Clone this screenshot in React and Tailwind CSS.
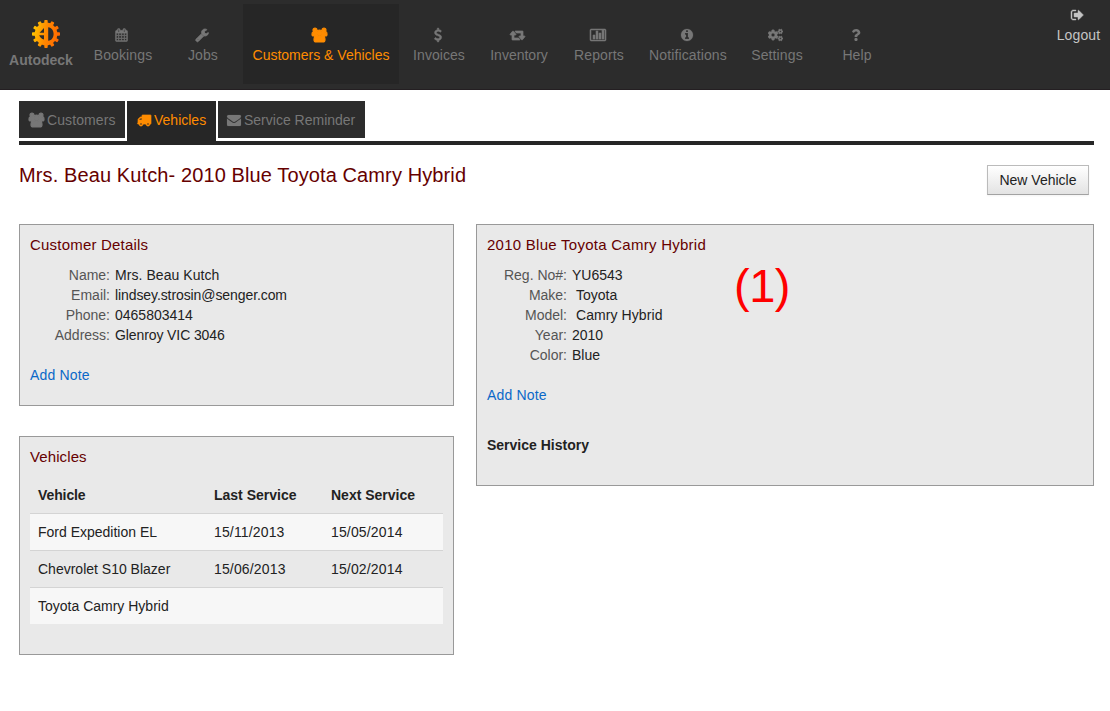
import { FaCogs, FaQuestion } from "react-icons/fa";

const PATHS = {
  calendar: [
    "0 0 1792 1792",
    "M192 1664h288v-288h-288v288zm352 0h320v-288h-320v288zm-352-352h288v-320h-288v320zm352 0h320v-320h-320v320zm-352-384h288v-288h-288v288zm736 736h320v-288h-320v288zm-384-736h320v-288h-320v288zm768 736h288v-288h-288v288zm-384-352h320v-320h-320v320zm-352-864v-288q0-13-9.5-22.5t-22.5-9.5h-64q-13 0-22.5 9.5t-9.5 22.5v288q0 13 9.5 22.5t22.5 9.5h64q13 0 22.5-9.5t9.5-22.5zm736 864h288v-320h-288v320zm-384-384h320v-288h-320v288zm384 0h288v-288h-288v288zm32-480v-288q0-13-9.5-22.5t-22.5-9.5h-64q-13 0-22.5 9.5t-9.5 22.5v288q0 13 9.5 22.5t22.5 9.5h64q13 0 22.5-9.5t9.5-22.5zm384-64v1280q0 52-38 90t-90 38h-1408q-52 0-90-38t-38-90v-1280q0-52 38-90t90-38h128v-96q0-66 47-113t113-47h64q66 0 113 47t47 113v96h384v-96q0-66 47-113t113-47h64q66 0 113 47t47 113v96h128q52 0 90 38t38 90z",
    60,
  ],
  wrench: [
    "0 0 1792 1792",
    "M448 1472q0-26-19-45t-45-19-45 19-19 45 19 45 45 19 45-19 19-45zm644-420l-682 682q-37 37-90 37-52 0-91-37l-106-108q-38-36-38-90 0-53 38-91l681-681q39 98 114.5 173.5t173.5 114.5zm634-435q0 39-23 106-47 134-164.5 217.5t-258.5 83.5q-185 0-316.5-131.5t-131.5-316.5 131.5-316.5 316.5-131.5q58 0 121.5 16.5t107.5 46.5q16 11 16 28t-16 28l-293 169v224l193 107q5-3 79-48.5t135.5-81 70.5-35.5q15 0 23.5 10t8.5 25z",
    100,
  ],
  users: [
    "64 0 1920 1792",
    "M657 896q-162 5-265 128h-134q-82 0-138-40.5t-56-118.5q0-353 124-353 6 0 43.5 21t97.5 42.5 119 21.5q67 0 133-23-5 37-5 66 0 159 81 293zm1071 637q0 120-73 189.5t-194 69.5h-874q-121 0-194-69.5t-73-189.5q0-53 3.5-103.5t14-109 26.5-108.5 43-97.5 62-81 85.5-53.5 111.5-20q10 0 43 21.5t73 48 107 48 135 21.5 135-21.5 107-48 73-48 43-21.5q61 0 111.5 20t85.5 53.5 62 81 43 97.5 26.5 108.5 14 109 3.5 103.5zm-1024-1277q0 106-75 181t-181 75-181-75-75-181 75-181 181-75 181 75 75 181zm704 384q0 159-112.5 271.5t-271.5 112.5-271.5-112.5-112.5-271.5 112.5-271.5 271.5-112.5 271.5 112.5 112.5 271.5zm576 225q0 78-56 118.5t-138 40.5h-134q-103-123-265-128 81-134 81-293 0-29-5-66 66 23 133 23 59 0 119-21.5t97.5-42.5 43.5-21q124 0 124 353zm-128-609q0 106-75 181t-181 75-181-75-75-181 75-181 181-75 181 75 75 181z",
    150,
  ],
  dollar: [
    "384 0 1024 1792",
    "M1362 1185q0 153-99.5 263.5t-258.5 136.5v175q0 14-9 23t-23 9h-135q-13 0-22.5-9.5t-9.5-22.5v-175q-66-9-127.5-31t-101.5-44.5-74-48-46.5-37.5-17.5-18q-17-21-2-41l103-135q7-10 23-12 15-2 24 9l2 2q113 99 243 125 37 8 74 8 81 0 142.5-43t61.5-122q0-28-15-53t-33.5-42-58.5-37.5-66-32-80-32.5q-39-16-61.5-25t-61.5-26.5-62.5-31-56.5-35.5-53.5-42.5-43.5-49-35.5-58-21-66.5-8.5-78q0-138 98-242t255-134v-180q0-13 9.5-22.5t22.5-9.5h135q14 0 23 9t9 23v176q57 6 110.5 23t87 33.5 63.5 37.5 39 29 15 14q17 18 5 38l-81 146q-8 15-23 16-14 3-27-7-3-3-14.5-12t-39-26.5-58.5-32-74.5-26-85.5-11.5q-95 0-155 43t-60 111q0 26 8.5 48t29.5 41.5 39.5 33 56 31 60.5 27 70 27.5q53 20 81 31.5t76 35 75.5 42.5 62 50 53 63.5 31.5 76.5 13 94z",
    60,
  ],
  retweet: [
    "64 0 1920 1792",
    "M1344 1504q0 13-9.5 22.5t-22.5 9.5h-960q-8 0-13.5-2t-9-7-5.5-8-3-11.5-1-11.5v-600h-192q-26 0-45-19t-19-45q0-24 15-41l320-384q19-22 49-22t49 22l320 384q15 17 15 41 0 26-19 45t-45 19h-192v384h576q16 0 25 11l160 192q7 10 7 21zm640-416q0 24-15 41l-320 384q-20 23-49 23t-49-23l-320-384q-15-17-15-41 0-26 19-45t45-19h192v-384h-576q-16 0-25-12l-160-192q-7-9-7-20 0-13 9.5-22.5t22.5-9.5h960q8 0 13.5 2t9 7 5.5 8 3 11.5 1 11.5v600h192q26 0 45 19t19 45z",
    90,
  ],
  chart: [
    "0 0 2048 1792",
    "M640 896v512h-256v-512h256zm384-512v1024h-256v-1024h256zm384 256v768h-256v-768h256zm384-384v1152h-256v-1152h256zm128 1248v-1216q0-13-9.5-22.5t-22.5-9.5h-1728q-13 0-22.5 9.5t-9.5 22.5v1216q0 13 9.5 22.5t22.5 9.5h1728q13 0 22.5-9.5t9.5-22.5zm128-1216v1216q0 66-47 113t-113 47h-1728q-66 0-113-47t-47-113v-1216q0-66 47-113t113-47h1728q66 0 113 47t47 113z",
    70,
  ],
  info: [
    "128 0 1536 1792",
    "M1152 1376v-160q0-14-9-23t-23-9h-96v-512q0-14-9-23t-23-9h-320q-14 0-23 9t-9 23v160q0 14 9 23t23 9h96v320h-96q-14 0-23 9t-9 23v160q0 14 9 23t23 9h448q14 0 23-9t9-23zm-128-896v-160q0-14-9-23t-23-9h-192q-14 0-23 9t-9 23v160q0 14 9 23t23 9h192q14 0 23-9t9-23zm640 416q0 209-103 385.5t-279.5 279.5-385.5 103-385.5-103-279.5-279.5-103-385.5 103-385.5 279.5-279.5 385.5-103 385.5 103 279.5 279.5 103 385.5z",
    30,
  ],
  logout: [
    "64 0 1664 1792",
    "M704 1440q0 4 1 20t.5 26.5-3 23.5-10 19.5-20.5 6.5h-320q-119 0-203.5-84.5t-84.5-203.5v-704q0-119 84.5-203.5t203.5-84.5h320q13 0 22.5 9.5t9.5 22.5q0 4 1 20t.5 26.5-3 23.5-10 19.5-20.5 6.5h-320q-66 0-113 47t-47 113v704q0 66 47 113t113 47h312l11.5 1 11.5 3 8 5.5 7 9 2 13.5zm928-544q0 26-19 45l-544 544q-19 19-45 19t-45-19-19-45v-288h-448q-26 0-45-19t-19-45v-384q0-26 19-45t45-19h448v-288q0-26 19-45t45-19 45 19l544 544q19 19 19 45z",
    60,
  ],
  truck: [
    "0 0 1792 1792",
    "M640 1408q0-52-38-90t-90-38-90 38-38 90 38 90 90 38 90-38 38-90zm-384-512h384v-256h-158q-13 0-22 9l-195 195q-9 9-9 22v30zm1280 512q0-52-38-90t-90-38-90 38-38 90 38 90 90 38 90-38 38-90zm256-1088v1024q0 15-4 26.5t-13.5 18.5-16.5 11.5-23.5 6-22.5 2-25.5 0-22.5-.5q0 106-75 181t-181 75-181-75-75-181h-384q0 106-75 181t-181 75-181-75-75-181h-64q-3 0-22.5.5t-25.5 0-22.5-2-23.5-6-16.5-11.5-13.5-18.5-4-26.5q0-26 19-45t45-19v-320q0-8-.5-35t0-38 2.5-34.5 6.5-37 14-30.5 22.5-30l198-198q19-19 50.5-32t58.5-13h160v-192q0-26 19-45t45-19h1024q26 0 45 19t19 45z",
    90,
  ],
  envelope: [
    "0 0 1792 1792",
    "M1792 710v794q0 66-47 113t-113 47h-1472q-66 0-113-47t-47-113v-794q44 49 101 87 362 246 497 345 57 42 92.5 65.5t94.5 48 110 24.5h2q51 0 110-24.5t94.5-48 92.5-65.5q170-123 498-345 57-39 100-87zm0-294q0 79-49 151t-122 123q-376 261-468 325-10 7-42.5 31t-54 38.5-52 32.5-57.5 27-50 9h-2q-23 0-50-9t-57.5-27-52-32.5-54-38.5-42.5-31q-91-64-262-182.5t-205-142.5q-62-42-117-115.5t-55-136.5q0-78 41.5-130t118.5-52h1472q65 0 112.5 47t47.5 113z",
    20,
  ],
};

function Icon({ name, className }) {
  if (name === "cogs") return <FaCogs className={className} stroke="currentColor" strokeWidth="14" />;
  if (name === "question") return <FaQuestion className={className} />;
  const [box, d, weight] = PATHS[name];
  return (
    <svg viewBox={box} className={`overflow-visible ${className}`} fill="currentColor" stroke="currentColor" strokeWidth={weight}>
      <path d={d} />
    </svg>
  );
}

const TEETH = [0, 30, 60, 90, 120, 150, 180, 210, 240, 270, 300, 330];

function Logo() {
  return (
    <svg viewBox="0 0 28 28" className="h-7 w-7">
      <defs>
        <linearGradient id="flame" gradientUnits="userSpaceOnUse" x1="0" y1="10" x2="28" y2="16">
          <stop offset="0" stopColor="#ffc800" />
          <stop offset="0.5" stopColor="#ff8800" />
          <stop offset="1" stopColor="#ff6600" />
        </linearGradient>
        <mask id="gear">
          <circle cx="14" cy="14" r="11.4" fill="#fff" />
          {TEETH.map((a) => (
            <rect key={a} x="12.3" y="0" width="3.400" height="5" rx="0.8" fill="#fff" transform={`rotate(${a} 14 14)`} />
          ))}
          <path d="M12 8v4.800H7.600zM7.200 15.200H12v4.300c-2.200-.5-4-2-4.800-4.300zM16.200 7.200c3.600.4 5.400 3.300 5.400 6.800s-1.800 6.400-5.400 6.800z" fill="#000" />
        </mask>
      </defs>
      <rect width="28" height="28" fill="url(#flame)" mask="url(#gear)" />
    </svg>
  );
}

const NAV = [
  ["Bookings", "calendar", "w-20", "h-3.5 w-[13px]", "tracking-[0.12px]"],
  ["Jobs", "wrench", "w-20", "h-3.5 w-3.5", "tracking-[0.1px]"],
  ["Customers & Vehicles", "users", "w-[156px]", "h-3.5 w-[15px]", ""],
  ["Invoices", "dollar", "w-20", "h-3.5 w-2", "tracking-[0.05px]"],
  ["Inventory", "retweet", "w-20", "h-3.5 w-[15px]", ""],
  ["Reports", "chart", "w-20", "h-3.5 w-4", "tracking-[0.12px]"],
  ["Notifications", "info", "w-[98px]", "h-3.5 w-3", "tracking-[0.12px]"],
  ["Settings", "cogs", "w-20", "h-3.5 w-[15px]", "tracking-[0.12px]"],
  ["Help", "question", "w-20", "h-3 w-2.5", "tracking-[0.1px]"],
];

function NavBar() {
  return (
    <header className="flex h-[90px] border-b border-[#241f22] bg-[#2c2c2c] text-[#777]">
      <div className="flex w-[83px] flex-col items-center pt-5 pr-px">
        <div className="pl-2.5">
          <Logo />
        </div>
        <div className="mt-0.5 text-sm leading-5 font-bold">Autodeck</div>
      </div>
      <nav className="flex pt-1">
        {NAV.map(([label, icon, width, size, tracking]) => (
          <a
            key={label}
            className={`flex h-20 flex-col items-center ${width} ${
              icon === "users" ? "bg-[#262626] text-[#ff8c00]" : ""
            }`}
          >
            <span className="mt-6 flex h-3.5 items-center pr-[3px]">
              <Icon name={icon} className={size} />
            </span>
            <span className={`mt-[3px] text-sm leading-5 whitespace-nowrap ${tracking}`}>{label}</span>
          </a>
        ))}
      </nav>
      <a className="ml-auto flex w-[63px] flex-col items-center pt-2 text-[#c4c4c4]">
        <span className="pr-[3px]">
          <Icon name="logout" className="h-3.5 w-[13px]" />
        </span>
        <span className="mt-[3px] text-sm leading-5 tracking-[0.12px]">Logout</span>
      </a>
    </header>
  );
}

function Tabs() {
  return (
    <div className="mt-[11px] flex h-11 items-start gap-0.5 border-b-4 border-[#262626] text-sm text-[#777]">
      <a className="flex h-[37px] w-[106px] items-center gap-[3px] bg-[#2c2c2c] pl-2.5 tracking-[0.1px]">
        <Icon name="users" className="h-3.5 w-[15px]" />
        Customers
      </a>
      <a className="flex h-10 w-[89px] items-center gap-[3px] bg-[#262626] pb-[3px] pl-2.5 text-[#ff8c00]">
        <Icon name="truck" className="h-3.5 w-3.5" />
        Vehicles
      </a>
      <a className="flex h-[37px] w-[147px] items-center gap-[3px] bg-[#2c2c2c] pl-[9px]">
        <Icon name="envelope" className="h-3.5 w-3.5" />
        <span className="whitespace-nowrap">Service Reminder</span>
      </a>
    </div>
  );
}

function Details({ rows, labelWidth }) {
  return (
    <dl className="mt-2.5">
      {rows.map(([label, value, pad, tracking = ""]) => (
        <div key={label} className="flex h-5 gap-[5px] leading-5">
          <dt className={`text-right text-[#555] ${labelWidth}`}>{label}</dt>
          <dd className={`${pad ? "pl-1" : ""} ${tracking}`}>{value}</dd>
        </div>
      ))}
    </dl>
  );
}

const CUSTOMER = [
  ["Name:", "Mrs. Beau Kutch", false, "tracking-[0.06px]"],
  ["Email:", "lindsey.strosin@senger.com", false, "tracking-[-0.09px]"],
  ["Phone:", "0465803414"],
  ["Address:", "Glenroy VIC 3046", false, "tracking-[-0.1px]"],
];

const VEHICLE = [
  ["Reg. No#:", "YU6543"],
  ["Make:", "Toyota", true],
  ["Model:", "Camry Hybrid", true, "tracking-[0.08px]"],
  ["Year:", "2010"],
  ["Color:", "Blue"],
];

const SERVICES = [
  ["Ford Expedition EL", "15/11/2013", "15/05/2014"],
  ["Chevrolet S10 Blazer", "15/06/2013", "15/02/2014"],
  ["Toyota Camry Hybrid", "", ""],
];

export default function App() {
  return (
    <div className="h-[711px] w-[1110px] overflow-hidden bg-white font-['Liberation_Sans',Arial,sans-serif] text-sm text-[#222]">
      <NavBar />
      <main className="pr-4 pl-[19px]">
        <Tabs />
        <div className="flex h-[79px] items-start justify-between pr-[5px]">
          <h1 className="mt-[15px] text-xl leading-[30px] tracking-[0.11px] text-[#600]">
            Mrs. Beau Kutch- 2010 Blue Toyota Camry Hybrid
          </h1>
          <button className="mt-5 h-[30px] w-[102px] border border-[#bbb] border-b-[#a2a2a2] bg-linear-to-b from-white to-[#e3e3e3] text-sm whitespace-nowrap text-[#222] shadow-[0_1px_2px_rgba(0,0,0,0.05)]">
            New Vehicle
          </button>
        </div>
        <div className="flex items-start gap-[22px]">
          <div className="flex w-[435px] flex-col gap-[30px]">
            <section className="h-[182px] border border-[#999] bg-[#e9e9e9] px-2.5 pt-2.5">
              <h2 className="text-[15px] leading-5 tracking-[0.2px] text-[#600]">Customer Details</h2>
              <Details rows={CUSTOMER} labelWidth="w-20" />
              <a className="mt-5 block leading-5 tracking-[0.18px] text-[#0b68c8]">Add Note</a>
            </section>
            <section className="h-[219px] border border-[#999] bg-[#e9e9e9] px-2.5 pt-2.5">
              <h2 className="text-[15px] leading-5 tracking-[0.1px] text-[#600]">Vehicles</h2>
              <table className="mt-2.5 w-[413px] table-fixed text-left leading-5">
                <thead>
                  <tr className="h-9">
                    <th className="w-[176px] pl-2 tracking-[-0.1px]">Vehicle</th>
                    <th className="w-[117px] pl-2">Last Service</th>
                    <th className="pl-2">Next Service</th>
                  </tr>
                </thead>
                <tbody>
                  {SERVICES.map((row) => (
                    <tr key={row[0]} className="h-[37px] border-t border-[#d4d4d4] odd:bg-[#f7f7f7]">
                      {row.map((cell, i) => (
                        <td key={i} className={i ? "pl-2 tracking-[0.15px]" : "pl-2"}>
                          {cell}
                        </td>
                      ))}
                    </tr>
                  ))}
                </tbody>
              </table>
            </section>
          </div>
          <section className="relative h-[262px] w-[618px] border border-[#999] bg-[#e9e9e9] px-2.5 pt-2.5">
            <h2 className="text-[15px] leading-5 tracking-[0.26px] text-[#600]">2010 Blue Toyota Camry Hybrid</h2>
            <Details rows={VEHICLE} labelWidth="w-20" />
            <a className="mt-5 block leading-5 tracking-[0.18px] text-[#0b68c8]">Add Note</a>
            <h3 className="mt-[30px] leading-5 font-bold">Service History</h3>
            <span className="absolute top-[31px] left-[257px] text-[47px] leading-[60px] tracking-[-0.5px] text-[#f00]">(1)</span>
          </section>
        </div>
      </main>
    </div>
  );
}
